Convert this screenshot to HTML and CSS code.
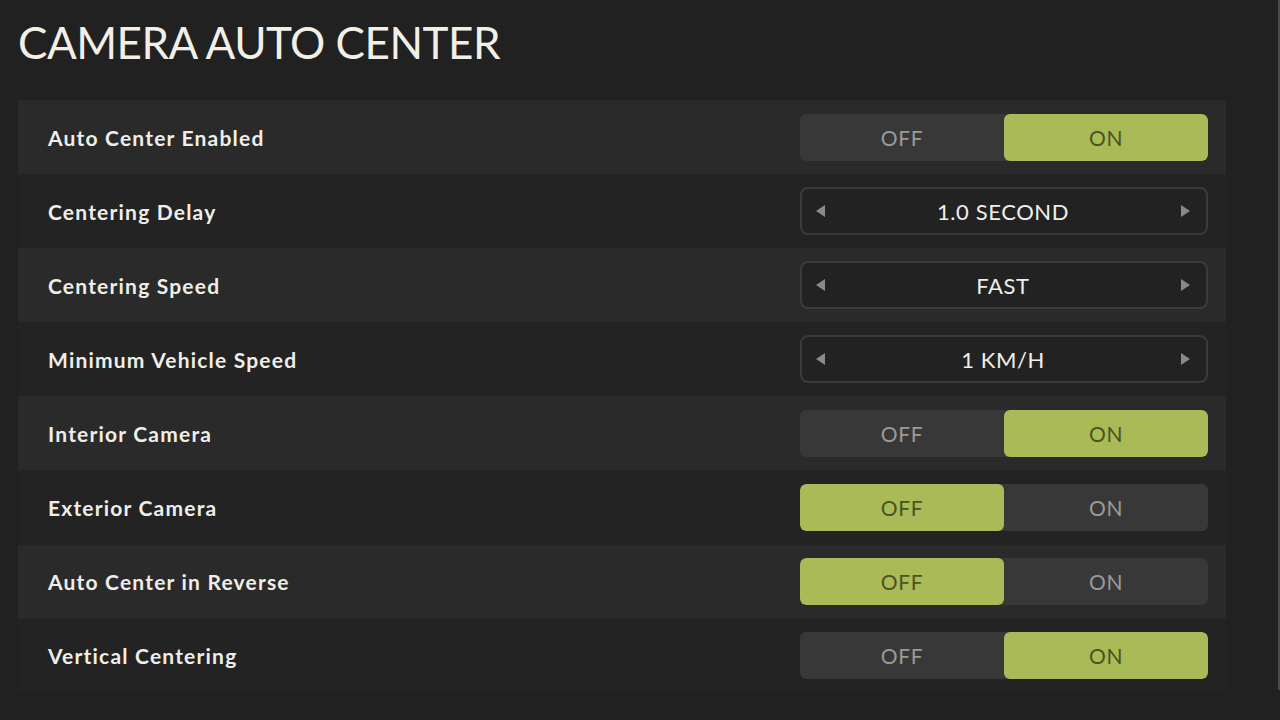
FILE: index.html
```html
<!DOCTYPE html>
<html>
<head>
<meta charset="utf-8">
<link rel="stylesheet" href="styles.css">
</head>
<body>
<div class="screen">
  <main class="content">
    <h1 class="title">CAMERA AUTO CENTER</h1>
    <section class="panel">
      <div class="row">
        <span class="label">Auto Center Enabled</span>
        <div class="toggle"><span class="opt">OFF</span><span class="opt active">ON</span></div>
      </div>
      <div class="row">
        <span class="label">Centering Delay</span>
        <div class="selector"><span class="arrow left"></span><span class="value">1.0 SECOND</span><span class="arrow right"></span></div>
      </div>
      <div class="row">
        <span class="label">Centering Speed</span>
        <div class="selector"><span class="arrow left"></span><span class="value">FAST</span><span class="arrow right"></span></div>
      </div>
      <div class="row">
        <span class="label">Minimum Vehicle Speed</span>
        <div class="selector"><span class="arrow left"></span><span class="value">1 KM/H</span><span class="arrow right"></span></div>
      </div>
      <div class="row">
        <span class="label">Interior Camera</span>
        <div class="toggle"><span class="opt">OFF</span><span class="opt active">ON</span></div>
      </div>
      <div class="row">
        <span class="label">Exterior Camera</span>
        <div class="toggle"><span class="opt active">OFF</span><span class="opt">ON</span></div>
      </div>
      <div class="row">
        <span class="label">Auto Center in Reverse</span>
        <div class="toggle"><span class="opt active">OFF</span><span class="opt">ON</span></div>
      </div>
      <div class="row">
        <span class="label">Vertical Centering</span>
        <div class="toggle"><span class="opt">OFF</span><span class="opt active">ON</span></div>
      </div>
    </section>
  </main>
  <div class="scrollbar"></div>
</div>
</body>
</html>
```

FILE: styles.css
```css
html, body {
  margin: 0;
  padding: 0;
  background: #212121;
  width: 1280px;
  height: 720px;
  overflow: hidden;
  font-family: "Lato", "Noto Sans", sans-serif;
}

.screen {
  display: flex;
  height: 720px;
}

.content {
  width: 1208px;
  padding-left: 18px;
}

.title {
  margin: 0;
  padding-top: 18px;
  height: 100px;
  box-sizing: border-box;
  font-weight: 400;
  font-size: 44px;
  line-height: 48px;
  color: #f1f0e8;
  letter-spacing: -0.5px;
}

.panel {
  display: flex;
  flex-direction: column;
  width: 1208px;
}

.row {
  display: flex;
  align-items: center;
  justify-content: space-between;
  height: 74.1px;
  padding: 0 18px 0 30px;
  background: #232323;
}

.row:nth-child(odd) {
  background: #2a2a2a;
}

.label {
  font-size: 21px;
  font-weight: 700;
  color: #efeee8;
  letter-spacing: 1.2px;
}

.toggle {
  display: flex;
  width: 408px;
  height: 47px;
  border-radius: 6px;
  background: #383838;
  overflow: hidden;
}

.opt {
  flex: 1;
  display: flex;
  align-items: center;
  justify-content: center;
  font-size: 21px;
  letter-spacing: 0.6px;
  color: #9a9a98;
  border-radius: 6px;
}

.opt.active {
  background: #a9ba57;
  color: #4b5322;
}

.selector {
  display: flex;
  align-items: center;
  justify-content: space-between;
  width: 408px;
  height: 48px;
  box-sizing: border-box;
  border: 2px solid #3a3a3a;
  border-radius: 8px;
  background: #222222;
  padding: 0 16px 0 14px;
}

.value {
  font-size: 22px;
  letter-spacing: 0.6px;
  color: #efefea;
}

.arrow {
  width: 0;
  height: 0;
  border-top: 6px solid transparent;
  border-bottom: 6px solid transparent;
}

.arrow.left {
  border-right: 9px solid #8a8a8a;
}

.arrow.right {
  border-left: 9px solid #8a8a8a;
}

.scrollbar {
  margin-left: auto;
  width: 2px;
  height: 690px;
  background: #4a4a4a;
}
```
